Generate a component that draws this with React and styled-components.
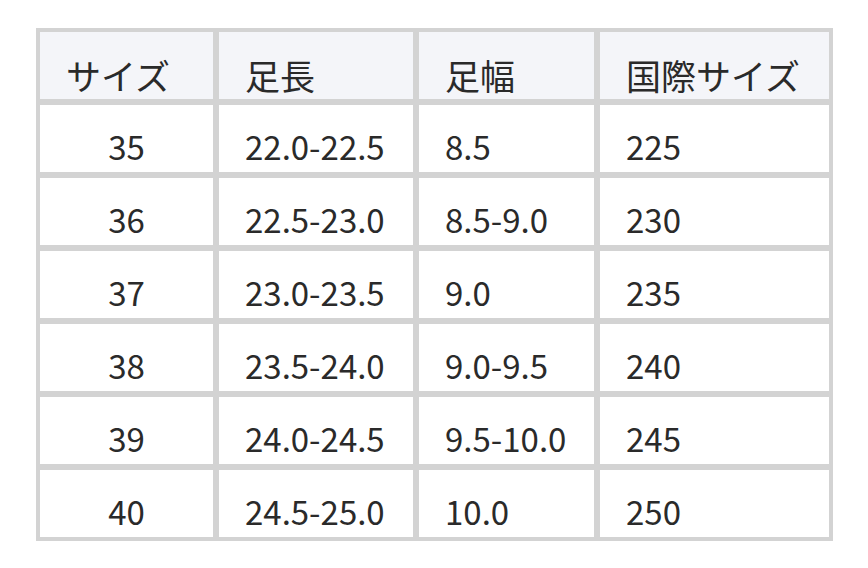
import React from "react";
import styled, { createGlobalStyle } from "styled-components";

const Global = createGlobalStyle`
  html, body { margin: 0; padding: 0; background: #ffffff; }
  body { font-family: "Noto Sans CJK JP", "Noto Sans", sans-serif; color: #2a2a2a; }
`;

const Page = styled.div`
  padding: 28px 0 0 36px;
`;

const Table = styled.div`
  display: grid;
  grid-template-columns: 173px 194px 175px 229px;
  grid-auto-rows: 67px;
  gap: 6px;
  padding: 4px;
  background: #d3d3d3;
  width: fit-content;
`;

const Cell = styled.div`
  display: flex;
  align-items: flex-end;
  justify-content: ${(p) => (p.$center ? "center" : "flex-start")};
  padding: 0 ${(p) => (p.$center ? "0" : "26px")} 5px;
  background: #ffffff;
  font-size: 33px;
  line-height: 42px;
  white-space: nowrap;
`;

const HeadCell = styled(Cell)`
  background: #f4f5f9;
  font-size: 35px;
  padding-bottom: 3px;
`;

const headers = ["サイズ", "足長", "足幅", "国際サイズ"];
const rows = [
  ["35", "22.0-22.5", "8.5", "225"],
  ["36", "22.5-23.0", "8.5-9.0", "230"],
  ["37", "23.0-23.5", "9.0", "235"],
  ["38", "23.5-24.0", "9.0-9.5", "240"],
  ["39", "24.0-24.5", "9.5-10.0", "245"],
  ["40", "24.5-25.0", "10.0", "250"],
];

export default function App() {
  return (
    <>
      <Global />
      <Page>
        <Table>
          {headers.map((h) => (
            <HeadCell key={h}>{h}</HeadCell>
          ))}
          {rows.map((r) =>
            r.map((v, i) => (
              <Cell key={r[0] + "-" + i} $center={i === 0}>
                {v}
              </Cell>
            ))
          )}
        </Table>
      </Page>
    </>
  );
}
